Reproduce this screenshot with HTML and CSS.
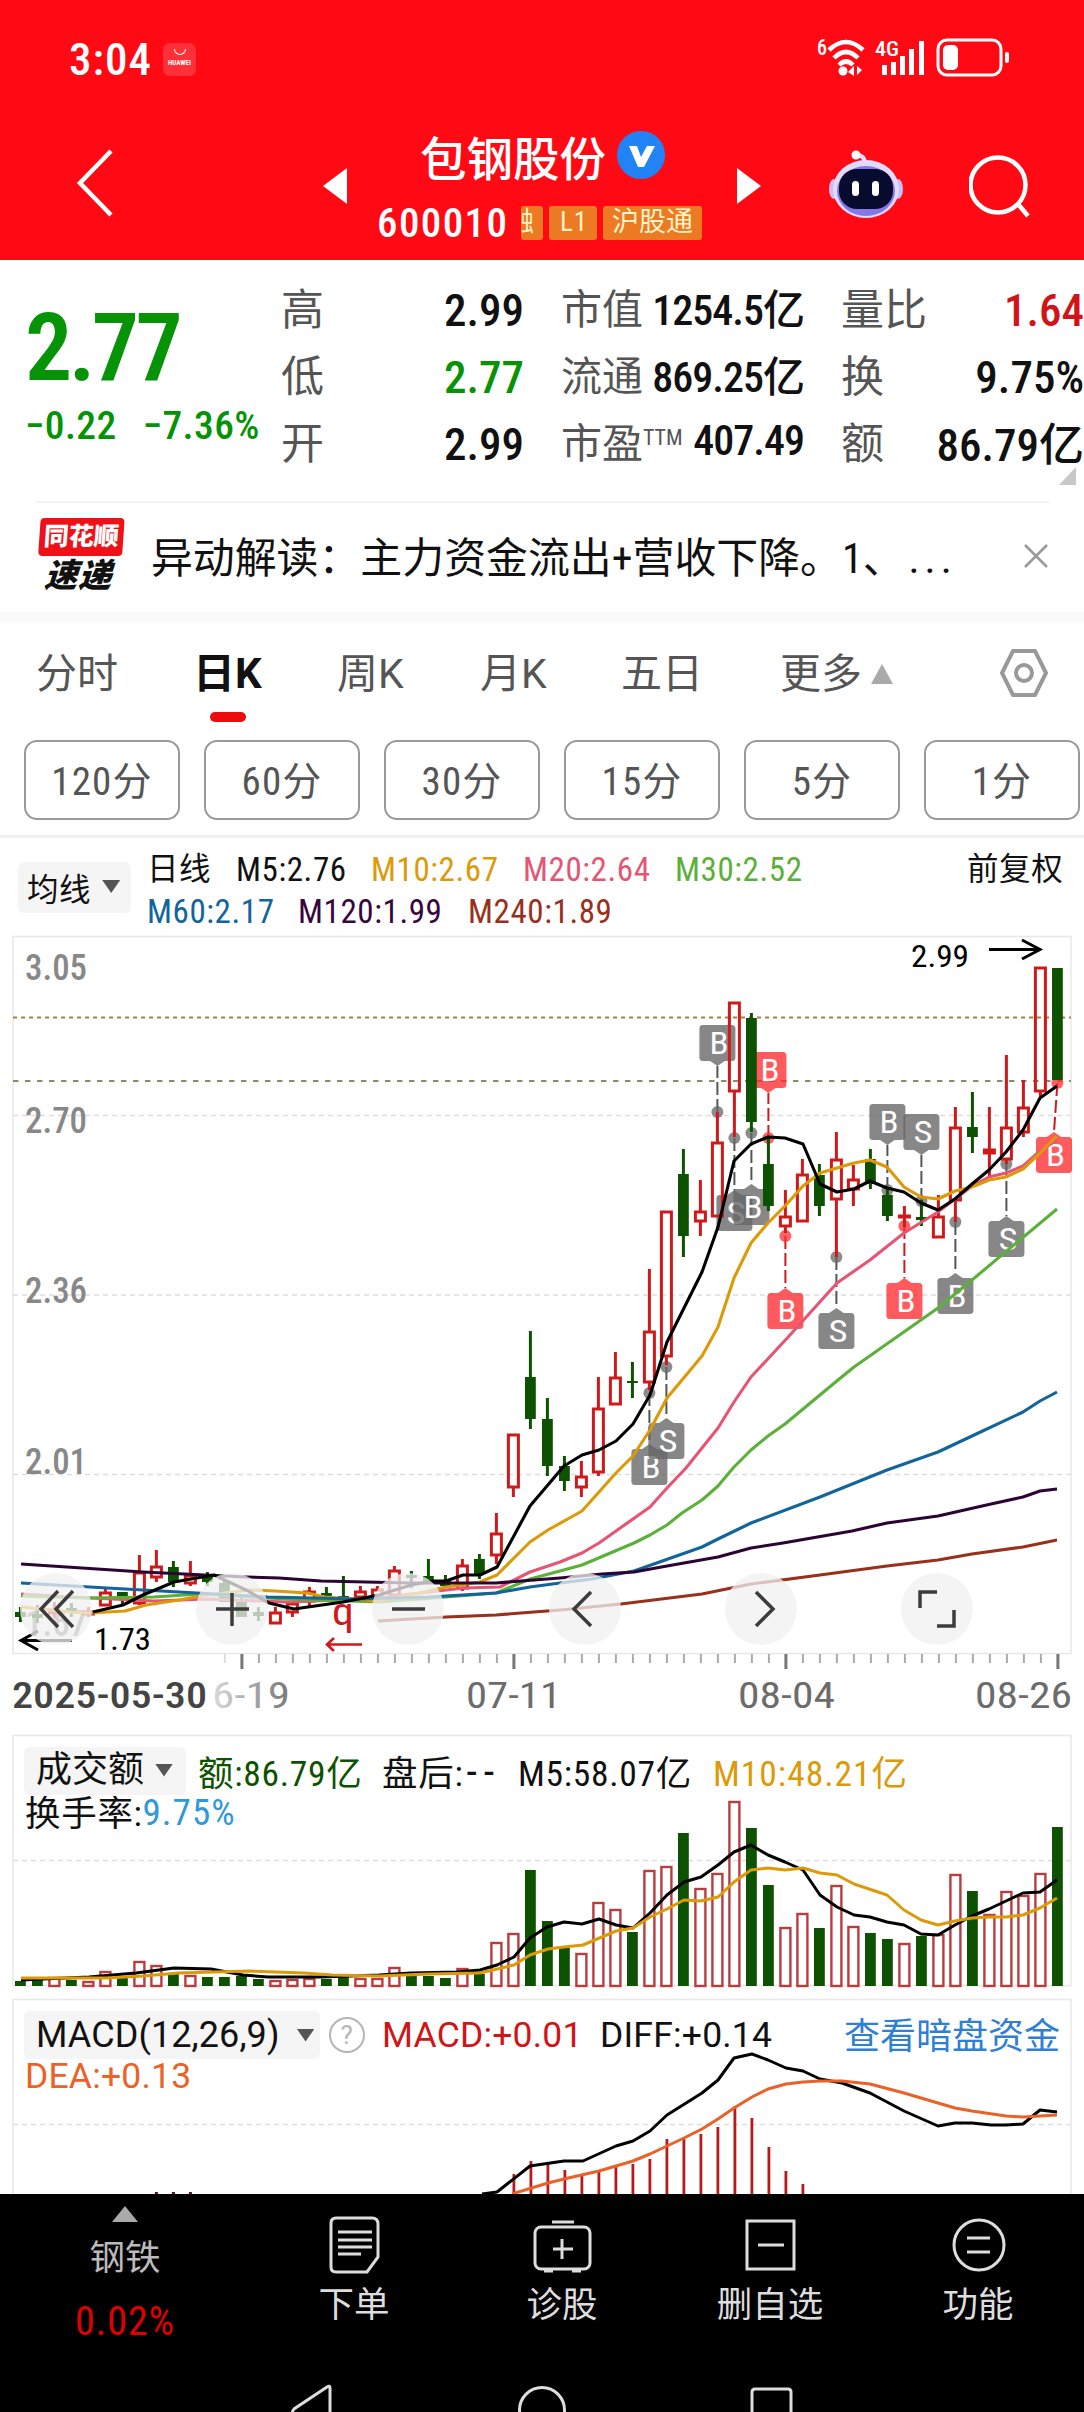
FILE: index.html
```html
<!DOCTYPE html>
<html lang="zh-CN">
<head>
    <meta charset="UTF-8">
    <title>包钢股份 600010</title>
    <link rel="stylesheet" href="styles.css">
</head>
<body>

<header class="top">
    <div class="status">
        <span class="clock">3:04</span>
        <span class="store"><i></i>HUAWEI</span>
        <svg class="status-icons" width="198" height="44" viewBox="-2 0 198 44">
            <text x="0" y="18" font-size="22" textLength="10" lengthAdjust="spacingAndGlyphs">6</text>
            <g fill="none" stroke="#fff" stroke-width="4.5">
                <path d="M12 13 Q29 -3 46 13"/>
                <path d="M17 21 Q29 9 41 21"/>
                <path d="M22 28 Q29 21 36 28"/>
            </g>
            <circle cx="26" cy="34" r="4.5"/>
            <path d="M37 29v10l-6-4z M40 29v9l5-5z"/>
            <text x="58" y="19" font-size="21" textLength="24" lengthAdjust="spacingAndGlyphs">4G</text>
            <path d="M65 28h5v10h-5z M74 25h5v13h-5z M83 19h5v19h-5z M92 12h5v26h-5z M102 4h5v34h-5z"/>
            <rect x="121" y="3" width="63" height="35" rx="9" fill="none" stroke="#fff" stroke-width="3"/>
            <rect x="126" y="8" width="15" height="25" rx="5"/>
            <rect x="188" y="15" width="4" height="11" rx="2"/>
        </svg>
    </div>
    <div class="bar">
        <svg class="back" width="40" height="72" viewBox="0 0 40 72"><path d="M36 3 5 35 36 67"/></svg>
        <svg class="prev" width="24" height="36"><path d="M24 0v36L0 18z"/></svg>
        <div class="stock">
            <h1>包钢股份
                <svg width="48" height="48" viewBox="0 0 48 48"><circle cx="24" cy="24" r="24" fill="#2283f6"/><path d="M12 15h8l4 11 6-11h8L27 36h-6z" fill="#fff"/></svg>
            </h1>
            <div class="code">
                <b>600010</b>
                <span class="tag cut"><em>融</em></span><span class="tag l1">L1</span><span class="tag">沪股通</span>
            </div>
        </div>
        <svg class="next" width="24" height="36"><path d="M0 0v36l24-18z"/></svg>
        <svg class="robot" width="74" height="70" viewBox="0 0 74 70">
            <path d="M36 14Q36 5 27 5" fill="none" stroke="#e6d9ff" stroke-width="4"/>
            <circle cx="27" cy="5" r="4.5" fill="#fff"/>
            <ellipse cx="5" cy="39" rx="5" ry="10" fill="#c9bff5"/>
            <ellipse cx="69" cy="39" rx="5" ry="10" fill="#c9bff5"/>
            <ellipse cx="37" cy="39" rx="33" ry="29" fill="#e3dbfb"/>
            <ellipse cx="37" cy="41" rx="29" ry="25" fill="#8577e8"/>
            <rect x="10" y="19" width="54" height="40" rx="18" fill="#070b2e"/>
            <rect x="23" y="31" width="7" height="15" rx="3.5" fill="#fff"/>
            <rect x="43" y="31" width="7" height="15" rx="3.5" fill="#fff"/>
        </svg>
        <svg class="search" width="62" height="66" viewBox="0 0 62 66"><circle cx="29" cy="31" r="27.5"/><path d="M49 50 59 62"/></svg>
    </div>
</header>

<section class="quote">
    <div class="price">
        <strong>2.77</strong>
        <p><span>−0.22</span><span>−7.36%</span></p>
    </div>
    <dl>
        <div><dt>高</dt><dd>2.99</dd></div>
        <div><dt>低</dt><dd class="down">2.77</dd></div>
        <div><dt>开</dt><dd>2.99</dd></div>
    </dl>
    <dl class="mid">
        <div><dt>市值</dt><dd>1254.5亿</dd></div>
        <div><dt>流通</dt><dd>869.25亿</dd></div>
        <div><dt>市盈<sup>TTM</sup></dt><dd>407.49</dd></div>
    </dl>
    <dl>
        <div><dt>量比</dt><dd class="up">1.64</dd></div>
        <div><dt>换</dt><dd>9.75%</dd></div>
        <div><dt>额</dt><dd class="yi">86.79亿</dd></div>
    </dl>
    <i class="corner"></i>
</section>

<section class="news">
    <div class="badge"><b>同花顺</b><em>速递</em></div>
    <p>异动解读：主力资金流出+营收下降。1、<span>...</span></p>
    <svg width="26" height="26"><path d="M2 2 24 24M24 2 2 24"/></svg>
</section>

<nav class="tabs">
    <a>分时</a><a class="on">日K</a><a>周K</a><a>月K</a><a>五日</a><a>更多<i></i></a>
    <svg width="50" height="50" viewBox="0 0 50 50"><path d="M14 3h22L47 25 36 47H14L3 25z"/><circle cx="25" cy="25" r="8"/></svg>
</nav>

<div class="periods">
    <button>120分</button><button>60分</button><button>30分</button><button>15分</button><button>5分</button><button>1分</button>
</div>

<section class="legend">
    <span class="chip">均线<i></i></span>
    <div class="ma">
        <p><span class="day">日线</span><span class="m5">M5:2.76</span><span class="m10">M10:2.67</span><span class="m20">M20:2.64</span><span class="m30">M30:2.52</span></p>
        <p><span class="m60">M60:2.17</span><span class="m120">M120:1.99</span><span class="m240">M240:1.89</span></p>
    </div>
    <span class="adjust">前复权</span>
</section>

<section class="kline">
    <svg id="kline" width="1084" height="798" viewBox="0 930 1084 798"></svg>
    <div class="controls">
        <svg viewBox="0 0 72 72"><path d="M38 18 21 36 38 54M53 18 36 36 53 54"/></svg>
        <svg viewBox="0 0 72 72"><path d="M20 36h33M36 20v33"/></svg>
        <svg viewBox="0 0 72 72"><path d="M20 36h33"/></svg>
        <svg viewBox="0 0 72 72"><path d="M42 19 25 36 42 53"/></svg>
        <svg viewBox="0 0 72 72"><path d="M31 19 48 36 31 53"/></svg>
        <svg viewBox="0 0 72 72"><path d="M19 35V19h17M53 37v16H36"/></svg>
    </div>
</section>

<section class="panel volume">
    <svg id="volume" class="plot" width="1084" height="264" viewBox="0 1728 1084 264"></svg>
    <div class="line">
        <span class="chip">成交额<i></i></span>
        <span class="amount">额:86.79亿</span><span class="after">盘后:<em>--</em></span><span class="v5">M5:58.07亿</span><span class="m10 v10">M10:48.21亿</span>
    </div>
    <div class="line second">换手率:<span class="rate">9.75%</span></div>
</section>

<section class="panel macd">
    <svg id="macd" class="plot" width="1084" height="202" viewBox="0 1992 1084 202"></svg>
    <div class="line">
        <span class="chip">MACD(12,26,9)<i></i></span>
        <span class="help">?</span>
        <span class="up mv">MACD:+0.01</span><span class="dv">DIFF:+0.14</span>
        <a>查看暗盘资金</a>
    </div>
    <div class="line second dea">DEA:+0.13</div>
</section>

<footer>
    <div class="menu">
        <div class="item sector"><i></i><span>钢铁</span><b>0.02%</b></div>
        <div class="item">
            <svg width="60" height="60" viewBox="0 0 60 60"><path d="M12 4h36q6 0 6 6v33L43 58H12q-5 0-5-5V9q0-5 5-5zM14 18h34M14 26h34M14 33h34M14 40h23"/></svg>
            <span>下单</span>
        </div>
        <div class="item">
            <svg width="60" height="60" viewBox="0 0 60 60"><rect x="3" y="13" width="55" height="42" rx="6"/><path d="M20 8h22M30 25v20M21 35h20M12 57h9M40 57h9"/></svg>
            <span>诊股</span>
        </div>
        <div class="item">
            <svg width="60" height="60" viewBox="0 0 60 60"><path d="M7 7h47v48H7zM18 31h26"/></svg>
            <span>删自选</span>
        </div>
        <div class="item">
            <svg width="60" height="60" viewBox="0 0 60 60"><circle cx="31" cy="31" r="25"/><path d="M19 24h23M19 38h23"/></svg>
            <span>功能</span>
        </div>
    </div>
    <svg class="keys" width="1084" height="28" viewBox="0 0 1084 28">
        <path d="M330 40V4q0-3-3-1L294 25q-3 3 0 6l10 9"/>
        <circle cx="542" cy="26" r="22.5"/>
        <path d="M752 40V8q0-3 3-3h33q3 0 3 3v32"/>
    </svg>
</footer>

<script src="script.js"></script>
</body>
</html>
```
FILE: styles.css
```css
* {
    box-sizing: border-box;
}
body {
    margin: 0;
    width: 1084px;
    height: 2412px;
    overflow: hidden;
    background: #fff;
    color: #111;
    font-family: Roboto, "Noto Sans CJK SC", sans-serif;
    font-stretch: 87.5%;
}
h1, p, dl, dt, dd {
    margin: 0;
}
em, i {
    font-style: normal;
}
svg {
    display: block;
    flex: none;
}
span, a, b {
    white-space: nowrap;
}

/* red header */
.top {
    height: 260px;
    background: #ff0a14;
    color: #fff;
}
.status {
    display: flex;
    height: 118px;
    padding: 0 69px;
    align-items: center;
}
.clock {
    width: 94px;
    font-size: 45px;
    font-weight: 500;
    letter-spacing: 1px;
}
.store {
    width: 33px;
    height: 33px;
    border-radius: 7px;
    background: #ff3038;
    font-size: 7px;
    font-weight: bold;
    text-align: center;
}
.store i {
    display: block;
    width: 12px;
    height: 6px;
    margin: 6px auto 4px;
    border: 1px solid #fff;
    border-top: 0;
    border-radius: 0 0 6px 6px;
}
.status-icons {
    margin-left: 619px;
    fill: #fff;
    font-weight: 500;
}
.bar {
    display: flex;
    height: 142px;
    padding-left: 75px;
}
.back, .search {
    fill: none;
    stroke: #fff;
    stroke-width: 4.5;
}
.back {
    margin-top: 30px;
}
.prev, .next {
    margin-top: 50px;
    fill: #fff;
}
.prev {
    margin-left: 208px;
}
.stock {
    width: 390px;
    padding: 7px 0 0 30px;
}
h1 {
    display: flex;
    height: 60px;
    padding-left: 43px;
    align-items: center;
    gap: 11px;
    font-size: 46.5px;
    font-weight: 500;
}
.code {
    display: flex;
    height: 40px;
    margin-top: 18px;
    align-items: center;
    gap: 6px;
}
.code b {
    width: 138px;
    font-size: 41px;
    font-weight: 500;
    letter-spacing: 1.4px;
}
.tag {
    height: 34px;
    padding: 0 9px;
    border-radius: 3px;
    background: #ec7a22;
    color: #fff3c8;
    font-size: 27px;
    line-height: 33px;
}
.tag.l1 {
    width: 48px;
    padding: 0 11px;
    letter-spacing: 1px;
}
.tag.cut {
    display: flex;
    width: 22px;
    padding: 0 9px 0 0;
    justify-content: flex-end;
    overflow: hidden;
}
.robot {
    margin: 32px 0 0 68px;
}
.search {
    margin: 36px 0 0 66px;
}

/* quote */
.quote {
    position: relative;
    display: flex;
    height: 241px;
    padding: 14px 0 0 25px;
}
.price {
    width: 256px;
    color: #069306;
}
.price strong {
    display: block;
    height: 108px;
    padding-top: 20px;
    font-size: 94px;
    font-weight: 600;
    line-height: 108px;
    letter-spacing: -3.6px;
}
.price p {
    display: flex;
    margin-top: 21px;
    gap: 26px;
    font-size: 39.5px;
    font-weight: 500;
    line-height: 46px;
    letter-spacing: 0.4px;
}
dl {
    width: 243px;
    margin-right: 37px;
}
dl:last-of-type {
    margin-right: 0;
}
dl div {
    display: flex;
    height: 67px;
    justify-content: space-between;
    align-items: center;
    white-space: nowrap;
}
dt {
    padding-bottom: 3px;
    color: #555;
    font-size: 43px;
}
.mid dt {
    font-size: 41px;
}
dd {
    padding-top: 5px;
    font-size: 45px;
    font-weight: 500;
}
dd.yi {
    padding-top: 0;
}
.mid dd {
    padding: 0 0 3px;
    font-size: 42px;
    letter-spacing: -1px;
}
dt sup {
    font-size: 22px;
    line-height: 0;
    vertical-align: 13px;
}
.down {
    color: #069306;
}
.up {
    color: #d01418;
}
.corner {
    position: absolute;
    left: 1059px;
    top: 207px;
    width: 17px;
    height: 18px;
    background: #c8c8c8;
    clip-path: polygon(100% 0, 100% 100%, 0 100%);
}

/* news strip */
.news {
    display: flex;
    height: 111px;
    margin: 0 35px 0 36px;
    padding-bottom: 4px;
    border-top: 2px solid #f2f2f2;
    align-items: center;
}
.badge {
    display: flex;
    width: 88px;
    margin: 2px 27px 0 0;
    flex-direction: column;
    align-items: center;
    font-weight: 900;
    transform: skewX(-4deg);
}
.badge b {
    width: 84px;
    height: 38px;
    border-radius: 4px;
    background: #ee1118;
    color: #fff;
    font-size: 25px;
    line-height: 37px;
    text-align: center;
}
.badge em {
    font-size: 33px;
    line-height: 40px;
    letter-spacing: 1px;
    font-style: italic;
}
.news p {
    width: 873px;
    padding-bottom: 3px;
    font-size: 41.9px;
    white-space: nowrap;
}
.news p span {
    margin-left: 4px;
    letter-spacing: 5px;
}
.news svg {
    fill: none;
    stroke: #999;
    stroke-width: 2.5;
}

/* chart tabs */
.tabs {
    display: flex;
    height: 122px;
    padding: 10px 0 0 36px;
    border-top: 10px solid #fafafa;
    color: #555;
    font-size: 41px;
}
.tabs a {
    position: relative;
    width: 149px;
    height: 84px;
    line-height: 84px;
}
.tabs a:nth-child(2) {
    width: 144px;
    margin-left: 8px;
}
.tabs a:nth-child(3) {
    width: 143px;
}
.tabs a:nth-child(4) {
    width: 141px;
}
.tabs a:nth-child(5) {
    width: 159px;
}
.tabs a:nth-child(6) {
    display: flex;
    width: 219px;
    align-items: center;
    gap: 9px;
}
.tabs a:nth-child(3), .tabs a:nth-child(4), .tabs .on {
    font-stretch: 100%;
}
.tabs i {
    width: 22px;
    height: 20px;
    background: #aaa;
    clip-path: polygon(50% 0, 100% 100%, 0 100%);
}
.tabs .on {
    color: #111;
    font-size: 42px;
    font-weight: bold;
}
.tabs .on::after {
    content: "";
    position: absolute;
    left: 17px;
    bottom: -6px;
    width: 36px;
    height: 10px;
    border-radius: 5px;
    background: #ec0c0e;
}
.tabs svg {
    margin: 16px 0 0 0;
    fill: none;
    stroke: #999;
    stroke-width: 4;
}
.periods {
    display: flex;
    height: 104px;
    padding: 6px 0 0 24px;
    border-bottom: 3px solid #f2f2f2;
    gap: 24px;
}
.periods button {
    width: 156px;
    height: 80px;
    padding: 0 0 5px;
    border: 2px solid #999;
    border-radius: 13px;
    background: #fff;
    color: #555;
    font: inherit;
    font-size: 39px;
    letter-spacing: 1.2px;
    flex: none;
}

/* moving averages */
.legend {
    display: flex;
    height: 92px;
    padding-left: 18px;
    font-size: 33px;
    letter-spacing: 0.6px;
}
.chip {
    display: flex;
    border-radius: 6px;
    background: #f5f5f5;
    align-items: center;
}
.chip i {
    width: 18px;
    height: 13px;
    background: #555;
    clip-path: polygon(0 0, 100% 0, 50% 100%);
}
.legend .chip {
    width: 113px;
    height: 51px;
    margin: 24px 16px 0 0;
    padding: 0 0 2px 9px;
    gap: 11px;
    font-size: 31.5px;
}
.ma {
    width: 820px;
    padding-top: 11px;
}
.ma p {
    display: flex;
    height: 42px;
    line-height: 42px;
}
.ma .day, .adjust {
    font-size: 31.5px;
}
.ma .day {
    width: 89px;
}
.ma .m5 {
    width: 135px;
}
.ma .m10, .ma .m20, .ma .m30 {
    width: 152px;
}
.ma .m60 {
    width: 151px;
}
.ma .m120 {
    width: 170px;
}
.adjust {
    padding-top: 11px;
    line-height: 42px;
}
.m10 { color: #dc9a08; }
.m20 { color: #e55574; }
.m30 { color: #5bb03a; }
.m60 { color: #11659a; }
.m120 { color: #38063f; }
.m240 { color: #99301c; }

/* k line */
.kline {
    position: relative;
    height: 798px;
}
.controls {
    position: absolute;
    left: 20px;
    top: 643px;
    display: flex;
    width: 953px;
    justify-content: space-between;
}
.controls svg {
    width: 72px;
    height: 72px;
    border-radius: 50%;
    background: rgba(241, 241, 241, 0.76);
    fill: none;
    stroke: #3c3c3c;
    stroke-width: 3.5;
}

/* volume and macd */
.panel {
    position: relative;
    height: 264px;
    padding: 19px 0 0 24px;
    font-size: 35.5px;
    letter-spacing: 0.7px;
}
.macd {
    height: 202px;
    font-stretch: 100%;
}
.plot {
    position: absolute;
    left: 0;
    top: 0;
}
.line {
    position: relative;
    display: flex;
    height: 48px;
    align-items: center;
}
.panel .chip {
    width: 162px;
    height: 48px;
    margin-right: 12px;
    padding-left: 12px;
    gap: 11px;
    font-size: 36px;
    line-height: 44px;
    letter-spacing: 0;
}
.volume .chip {
    padding-bottom: 2px;
}
.volume .line > span:not(.chip):not(.rate) {
    padding-bottom: 2px;
}
.panel.macd .chip {
    width: 296px;
    margin-right: 9px;
    gap: 17px;
    font-size: 36px;
    letter-spacing: 0.1px;
}
.second {
    height: 34px;
    padding-left: 1px;
}
.volume .second {
    height: 30px;
}
.line .rate {
    padding-top: 4px;
    color: #3299d8;
    font-size: 37px;
    letter-spacing: 1px;
}
.amount {
    width: 184px;
    color: #0d5200;
}
.after {
    width: 136px;
}
.after em {
    margin-left: 3px;
    font-size: 42px;
    line-height: 30px;
    letter-spacing: 7px;
}
.v5 {
    width: 195px;
}
.v10 {
    letter-spacing: 1px;
}
.help {
    width: 36px;
    height: 36px;
    margin-right: 17px;
    border: 2px solid #b5b5b5;
    border-radius: 50%;
    color: #b5b5b5;
    font-size: 26px;
    line-height: 32px;
    text-align: center;
}
.mv, .dv, .dea {
    letter-spacing: 0.2px;
}
.mv {
    width: 218px;
}
.dv {
    width: 244px;
}
.macd a {
    padding-bottom: 4px;
    color: #2f7fd4;
    font-size: 36px;
    letter-spacing: 0;
}
.dea {
    color: #ea6228;
}

/* bottom */
footer {
    height: 218px;
    background: #000;
    color: #ddd;
}
.menu {
    display: flex;
    height: 190px;
    padding-left: 21px;
}
.item {
    display: flex;
    width: 208px;
    padding-top: 20px;
    flex-direction: column;
    align-items: center;
    font-size: 35.5px;
}
.item svg, .keys {
    fill: none;
    stroke: #ddd;
    stroke-width: 3;
}
.item span {
    margin-top: 5px;
    line-height: 52px;
}
.sector {
    padding-top: 12px;
    color: #bbb;
}
.sector + .item {
    margin-left: 21px;
}
.sector i {
    width: 26px;
    height: 16px;
    background: #aaa;
    clip-path: polygon(50% 0, 100% 100%, 0 100%);
}
.sector span {
    margin-top: 10px;
}
.sector b {
    color: #e00000;
    font-size: 40px;
    font-weight: normal;
    line-height: 76px;
    letter-spacing: 1px;
}
```
FILE: script.js
```javascript
const X0 = 20.4, STEP = 17;
const RED = "#cf1a1c", GREEN = "#0d5200";

// color, high, body top, body bottom, low
const candles = [
    "g 1607 1612 1617 1622", "g 1605 1614 1618 1623", "r 1602 1609 1613 1618", "g 1603 1608 1612 1617",
    "r 1607 1611 1614 1617", "r 1589 1592 1605 1605", "g 1592 1592 1600 1605", "r 1555 1572 1603 1605",
    "r 1550 1566 1577 1582", "g 1561 1567 1582 1587", "r 1561 1575 1583 1586", "g 1572 1575 1582 1586",
    "g 1580 1583 1602 1602", "g 1598 1602 1617 1617", "g 1607 1612 1616 1621", "r 1607 1612 1623 1623",
    "r 1602 1603 1612 1617", "r 1587 1591 1601 1606", "g 1587 1593 1598 1601", "g 1576 1596 1601 1601",
    "r 1586 1591 1597 1597", "r 1586 1589 1597 1597", "r 1566 1570 1595 1595", "g 1571 1575 1578 1588",
    "g 1559 1576 1583 1583", "g 1575 1580 1586 1586", "r 1559 1565 1588 1591", "g 1554 1559 1574 1579",
    "r 1513 1533 1555 1564", "r 1434 1434 1487 1497", "g 1331 1377 1419 1429", "g 1398 1419 1466 1476",
    "g 1456 1466 1481 1491", "r 1461 1476 1487 1497", "r 1377 1408 1472 1476", "r 1352 1377 1404 1404",
    "g 1362 1381 1383 1398", "r 1269 1331 1382 1390", "r 1211 1211 1356 1365", "g 1149 1174 1236 1257",
    "r 1180 1211 1221 1236", "r 1112 1142 1216 1216", "r 1002 1002 1091 1137", "g 1013 1018 1122 1132",
    "g 1137 1164 1206 1211", "r 1190 1216 1226 1233", "r 1159 1174 1221 1221", "g 1164 1175 1206 1216",
    "r 1132 1159 1199 1257", "r 1165 1179 1189 1206", "g 1149 1159 1184 1189", "g 1187 1195 1216 1221",
    "r 1206 1215 1216 1227", "g 1200 1217 1220 1226", "r 1195 1216 1237 1237", "r 1107 1127 1200 1222",
    "g 1092 1127 1137 1153", "r 1107 1149 1153 1177", "r 1055 1127 1159 1164", "r 1080 1107 1132 1137",
    "r 967 967 1091 1097", "g 968 968 1080 1080"
].map(s => s.split(" ").map((v, k) => k ? +v : v));

const volumes = [
    1981, 1980, 1977, 1980, 1981, 1971, 1978, 1961, 1965, 1974, 1975, 1977, 1977, 1976, 1979, 1980,
    1979, 1978, 1979, 1977, 1978, 1978, 1967, 1976, 1976, 1978, 1968, 1974, 1942, 1933, 1870, 1921,
    1948, 1953, 1902, 1909, 1932, 1870, 1866, 1833, 1888, 1873, 1801, 1828, 1885, 1927, 1913, 1928,
    1885, 1926, 1933, 1939, 1943, 1936, 1934, 1874, 1891, 1914, 1891, 1895, 1873, 1827
];

const averages = [
    ["#e55574", "21,1594 71,1597 154,1601 207,1599 286,1602 339,1600 379,1598 411,1594 464,1588 500,1587 530,1572 560,1562 582,1553 599,1543 650,1507 667,1488 686,1468 718,1428 734,1402 751,1377 790,1335 837,1283 870,1260 904,1233 938,1212 972,1186 989,1177 1006,1173 1023,1166 1040,1151 1057,1140"],
    ["#5bb03a", "21,1596 89,1598 154,1597 200,1594 286,1599 379,1602 446,1597 496,1593 530,1579 560,1571 582,1565 634,1543 650,1535 667,1525 682,1513 702,1500 718,1486 734,1467 751,1450 768,1436 785,1424 838,1380 854,1367 938,1308 972,1280 1057,1209"],
    ["#dc9a08", "21,1607 71,1612 91,1613 125,1611 146,1605 179,1600 207,1595 250,1590 275,1591 307,1593 325,1597 379,1601 411,1595 446,1587 480,1582 497,1575 514,1558 530,1542 548,1530 582,1511 616,1473 633,1456 650,1430 667,1398 702,1356 718,1327 734,1278 751,1243 768,1223 785,1206 803,1186 820,1173 837,1168 854,1163 870,1160 887,1167 904,1187 921,1197 938,1199 955,1191 972,1187 989,1180 1006,1177 1023,1169 1040,1153 1057,1136"],
    ["#11659a", "21,1583 107,1588 179,1592 268,1597 357,1599 429,1597 496,1593 530,1587 560,1583 592,1579 634,1571 702,1547 718,1539 751,1523 820,1497 887,1470 938,1452 972,1436 1023,1412 1040,1401 1057,1392"],
    ["#2c0434", "21,1564 143,1572 246,1577 279,1578 321,1581 411,1583 496,1583 560,1578 602,1574 634,1572 667,1566 718,1557 751,1548 783,1543 852,1531 887,1523 938,1516 991,1504 1023,1497 1040,1491 1057,1489"],
    ["#99301c", "378,1621 446,1617 496,1615 560,1610 621,1604 702,1594 751,1584 820,1575 887,1566 938,1560 972,1554 1023,1547 1057,1540"],
    ["#000", "93,1612 123,1605 143,1595 174,1582 214,1575 246,1590 269,1603 294,1609 343,1602 379,1595 411,1585 434,1581 446,1581 463,1575 480,1575 497,1567 530,1506 564,1466 582,1455 599,1450 616,1441 633,1424 650,1395 667,1342 702,1272 718,1227 734,1161 751,1144 768,1137 785,1138 803,1144 820,1184 837,1192 854,1189 870,1181 887,1188 904,1192 921,1203 938,1210 955,1199 972,1184 989,1170 1006,1152 1023,1130 1040,1098 1057,1086"]
];

const volumeAverages = [
    ["#000", "21,1980 89,1977 136,1973 174,1968 211,1969 243,1975 268,1977 321,1977 379,1975 411,1973 457,1972 480,1970 497,1965 514,1957 530,1938 547,1927 564,1922 582,1924 599,1919 616,1925 633,1928 650,1913 667,1895 684,1882 701,1877 718,1865 734,1852 751,1845 768,1855 785,1862 803,1870 820,1895 837,1907 854,1915 870,1917 887,1922 904,1925 921,1934 938,1935 955,1925 972,1916 989,1909 1006,1901 1023,1893 1040,1892 1057,1880"],
    ["#dc9a08", "21,1978 107,1978 143,1976 179,1973 250,1971 304,1973 332,1975 379,1976 429,1974 480,1973 514,1965 530,1955 548,1949 564,1947 583,1945 616,1931 633,1928 650,1917 667,1909 684,1900 701,1901 718,1897 734,1882 751,1870 768,1868 785,1870 803,1868 820,1873 837,1875 854,1884 887,1895 904,1910 921,1920 938,1925 955,1921 972,1918 989,1917 1006,1917 1023,1915 1040,1908 1057,1898"]
];

const macdLines = [
    ["#000", "482,2194 497,2192 530,2166 564,2161 583,2161 616,2146 633,2141 650,2131 667,2115 702,2093 718,2080 734,2058 752,2054 768,2060 786,2068 803,2071 820,2079 842,2083 870,2093 904,2111 938,2126 955,2123 972,2123 991,2125 1006,2125 1023,2124 1040,2110 1057,2112"],
    ["#ea6228", "512,2194 548,2183 564,2179 599,2171 633,2161 650,2154 684,2138 702,2129 718,2119 734,2108 752,2097 768,2089 786,2084 803,2082 820,2081 842,2081 870,2084 904,2093 938,2103 955,2108 972,2111 1006,2116 1023,2117 1040,2116 1057,2115"]
];
const macdBars = [2174, 2161, 2164, 2170, 2176, 2172, 2165, 2164, 2159, 2139, 2137, 2134, 2127, 2106, 2118, 2147, 2171, 2184];

// candle index, letter, color, box top, dot y, box center x
const GREY = "#666";
const flags = [
    [37, "B", GREY, 1449, 1393], [38, "S", GREY, 1423, 1367],
    [41, "B", GREY, 1025, 1112], [42, "S", GREY, 1195, 1138], [43, "B", GREY, 1189, 1133],
    [44, "B", "#ff2d30", 1052, 1138], [45, "B", "#ff2d30", 1293, 1236], [48, "S", GREY, 1313, 1257],
    [51, "B", GREY, 1104, 1190], [53, "S", GREY, 1114, 1201], [52, "B", "#ff2d30", 1283, 1226],
    [55, "B", GREY, 1278, 1222], [58, "S", GREY, 1221, 1164], [61, "B", "#ff2d30", 1137, 1083, 1054]
];

const xAt = i => X0 + STEP * i;

function line(x1, y1, x2, y2, color, width, dash) {
    return `<line x1="${x1}" y1="${y1}" x2="${x2}" y2="${y2}" stroke="${color}" stroke-width="${width}"${dash ? ` stroke-dasharray="${dash}"` : ""}/>`;
}
function text(x, y, str, size, width, color, weight = 400) {
    return `<text x="${x}" y="${y}" font-size="${size}" font-weight="${weight}" fill="${color}" textLength="${width}" lengthAdjust="spacingAndGlyphs">${str}</text>`;
}
function polylines(list, width) {
    return list.map(([c, pts]) => `<polyline points="${pts}" fill="none" stroke="${c}" stroke-width="${width}" stroke-linejoin="round"/>`).join("");
}
function frame(top, bottom) {
    return `<rect x="13" y="${top}" width="1058" height="${bottom - top}" fill="none" stroke="#e8e8e8" stroke-width="1.5"/>`;
}
function box(x, top, bottom, color, stroke) {
    return color === "g"
        ? `<rect x="${x - 5.4}" y="${top}" width="10.8" height="${bottom - top}" fill="${GREEN}"/>`
        : `<rect x="${x - 5}" y="${top + 1}" width="10" height="${Math.max(bottom - top - 1, 1)}" fill="none" stroke="${stroke}" stroke-width="${stroke === RED ? 3 : 2.4}"/>`;
}

function drawFlag([i, letter, color, top, dot, cx]) {
    const x = xAt(i);
    const c = cx || x;
    const above = top < dot;
    const tip = above ? top + 41 : top - 5;
    const base = above ? top + 35.5 : top + 0.5;
    return line(x, dot, c, tip, color === GREY ? "#555" : RED, 2, "13 4")
        + `<g fill="${color}" opacity="0.78"><rect x="${c - 18}" y="${top}" width="36" height="36" rx="3.5"/><path d="M${c - 8} ${base}H${c + 8}L${c} ${tip}z"/></g>`
        + text(c - 8, top + 29, letter, 32, 19, "#fff")
        + `<circle cx="${x}" cy="${dot}" r="6" fill="${color}" opacity="0.75"/>`;
}

function drawKline() {
    let s = frame(936.5, 1653.5);
    [1115.5, 1295, 1474.5].forEach(y => s += line(13, y, 1071, y, "#ddd", 1.3, "5 4"));
    s += line(13, 1017.5, 1071, 1017.5, "#a8823c", 2, "4 4");
    s += line(13, 1081, 1071, 1081, "#8c8c68", 2, "5.5 6.5");

    [["3.05", 980], ["2.70", 1133], ["2.36", 1303], ["2.01", 1474], ["1.67", 1636]].forEach(([t, y]) => {
        s += text(25, y, t, 37, 62, "#888", 500);
    });

    s += flags.map(drawFlag).join("");
    candles.forEach(([c, high, top, bottom, low], i) => {
        const x = xAt(i);
        const color = c === "g" ? GREEN : RED;
        s += line(x, high, x, top, color, 3) + line(x, bottom, x, low, color, 3) + box(x, top, bottom, c, RED);
    });
    s += polylines(averages, 3.1);

    s += text(911, 967, "2.99", 31, 58, "#000");
    s += `<path d="M989 949.5H1040M1022 940 1040 949.5 1022 959" fill="none" stroke="#000" stroke-width="3"/>`;
    s += text(94, 1650, "1.73", 31, 57, "#000");
    s += `<path d="M72 1640.5H21M38 1631 21 1640.5 38 1650" fill="none" stroke="#000" stroke-width="3"/>`;
    s += text(332, 1625, "q", 39, 22, RED);
    s += `<path d="M362 1644.5H327M334 1638 327 1644.5 334 1651" fill="none" stroke="${RED}" stroke-width="2.6"/>`;

    for (let i = 12; i < 62; i++) {
        const major = (i - 13) % 16 === 0;
        s += line(xAt(i) + 0.5, 1654, xAt(i) + 0.5, major ? 1669 : 1663, i === 12 ? "#ddd" : major ? "#777" : "#aaa", major ? 3 : 2);
    }
    // the second date is faded under the first one
    s += `<defs><linearGradient id="fade" gradientUnits="userSpaceOnUse" x1="210" y1="0" x2="290" y2="0"><stop offset="0" stop-color="#ddd"/><stop offset="1" stop-color="#777"/></linearGradient></defs>`;
    s += text(12, 1708, "2025-05-30", 36, 195, "#444", 500);
    s += text(212, 1708, "6-19", 36, 78, "url(#fade)");
    s += text(466, 1708, "07-11", 36, 95, "#6c6c6c");
    s += text(738, 1708, "08-04", 36, 97, "#6c6c6c");
    s += text(975, 1708, "08-26", 36, 97, "#6c6c6c");
    document.getElementById("kline").innerHTML = s;
}

function drawVolume() {
    let s = frame(1735.5, 1985.5) + line(13, 1860.5, 1071, 1860.5, "#ddd", 1.3, "5 4");
    volumes.forEach((top, i) => s += box(xAt(i), top, 1986, candles[i][0], "#b93d40"));
    document.getElementById("volume").innerHTML = s + polylines(volumeAverages, 3);
}

function drawMacd() {
    let s = frame(1999.5, 2250) + line(13, 2124.5, 1071, 2124.5, "#ddd", 1.3, "5 4");
    macdBars.forEach((top, k) => s += line(xAt(k + 29) + 0.5, top, xAt(k + 29) + 0.5, 2194, "#b51a1c", 2.8));
    [8, 9, 10].forEach(i => s += line(xAt(i), 2192, xAt(i), 2194, "#511", 3));
    document.getElementById("macd").innerHTML = s + polylines(macdLines, 3);
}

drawKline();
drawVolume();
drawMacd();
```
